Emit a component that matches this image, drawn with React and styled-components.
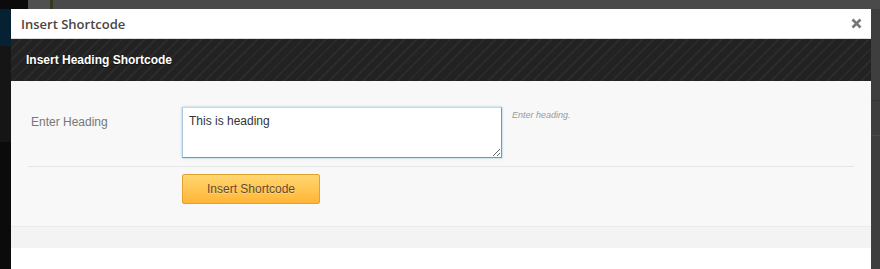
import styled, { createGlobalStyle } from 'styled-components'

const Global = createGlobalStyle`
    html, body {
        margin: 0;
        padding: 0;
        height: 269px;
        overflow: hidden;
    }
    body {
        font-family: "Liberation Sans", Arial, sans-serif;
    }
`

const Page = styled.div`
    height: 269px;
    box-sizing: border-box;
    padding: 9px 9px 0 11px;
    background:
        linear-gradient(to right, #0b0b0b 0 28px, #505050 28px 50px, #2f3b1c 50px 53px, #4a4a4a 53px) top / 100% 9px no-repeat,
        linear-gradient(#062232, #062232) 0 9px / 11px 37px no-repeat,
        linear-gradient(#151515, #151515) 0 46px / 11px 96px no-repeat,
        linear-gradient(to bottom, #3e3e3e 0 100px, #353535 100px 101px, #3e3e3e 101px 135px, #4a4a4a 135px 136px, #3e3e3e 136px) right top / 9px 100% no-repeat,
        #0b0b0b;
`

const Modal = styled.div`
    width: 860px;
    height: 260px;
    background: #fff;
    display: flex;
    flex-direction: column;
`

const TitleBar = styled.div`
    height: 29px;
    border-bottom: 1px solid #dcdcdc;
    display: flex;
    align-items: center;
    justify-content: space-between;
    padding: 0 9px 0 10px;
`

const Title = styled.h1`
    margin: 0;
    font-family: "Open Sans", sans-serif;
    font-weight: 600;
    font-size: 13px;
    color: #4a4444;
`

const Close = styled.span`
    color: #777;
    display: flex;
`

const SectionHead = styled.div`
    height: 42px;
    display: flex;
    align-items: center;
    padding-left: 15px;
    background:
        repeating-linear-gradient(-45deg, #222 0 6px, #2b2b2b 6px 8px);
    color: #fff;
    font-weight: bold;
    font-size: 12px;
    text-shadow: 0 1px 1px rgba(0, 0, 0, 0.6);
`

const Body = styled.div`
    background: #f8f8f8;
    padding: 0 17px;
`

const Row = styled.div`
    display: grid;
    grid-template-columns: 154px 330px 1fr;
    align-items: start;
    padding: ${(p) => p.pad || '0'};
    border-bottom: ${(p) => (p.divider ? '1px solid #e6e6e6' : 'none')};
`

const Label = styled.label`
    padding: 33px 0 0 3px;
    font-size: 12px;
    color: #777;
`

const TextArea = styled.textarea`
    box-sizing: border-box;
    width: 320px;
    height: 51px;
    margin-top: 25px;
    padding: 6px 6px 4px;
    border: 1px solid #5b9dd9;
    border-top-color: #c8d8e6;
    border-left-color: #a9c6e0;
    box-shadow: 0 0 2px rgba(30, 140, 190, 0.5);
    font-family: "Liberation Sans", Arial, sans-serif;
    font-size: 12px;
    color: #333;
    background: #fff;
    outline: none;
`

const Help = styled.span`
    padding-top: 28px;
    font-size: 9px;
    font-style: italic;
    color: #999;
`

const Button = styled.button`
    grid-column: 2;
    margin-top: 7px;
    width: 138px;
    height: 30px;
    border: 1px solid #e3a12d;
    border-radius: 2px;
    background: linear-gradient(#ffd670, #ffb637);
    font-family: "Liberation Sans", Arial, sans-serif;
    font-size: 12px;
    color: #5e4c30;
    text-shadow: 0 1px 0 rgba(255, 255, 255, 0.35);
    cursor: pointer;
`

const Footer = styled.div`
    height: 21px;
    background: #f3f3f3;
    border-top: 1px solid #ebebeb;
`

const Fill = styled.div`
    flex: 1;
    background: #fff;
`

export default function App() {
    return (
        <>
            <Global />
            <Page>
                <Modal>
                    <TitleBar>
                        <Title>Insert Shortcode</Title>
                        <Close>
                            <svg width="11" height="11" viewBox="0 0 11 11">
                                <path d="M1.5 1.5L9.5 9.5M9.5 1.5L1.5 9.5" stroke="currentColor" strokeWidth="2.6" />
                            </svg>
                        </Close>
                    </TitleBar>
                    <SectionHead>Insert Heading Shortcode</SectionHead>
                    <Body>
                        <Row divider pad="1px 0 8px">
                            <Label>Enter Heading</Label>
                            <TextArea defaultValue="This is heading" />
                            <Help>Enter heading.</Help>
                        </Row>
                        <Row pad="0 0 22px">
                            <Button>Insert Shortcode</Button>
                        </Row>
                    </Body>
                    <Footer />
                    <Fill />
                </Modal>
            </Page>
        </>
    )
}
